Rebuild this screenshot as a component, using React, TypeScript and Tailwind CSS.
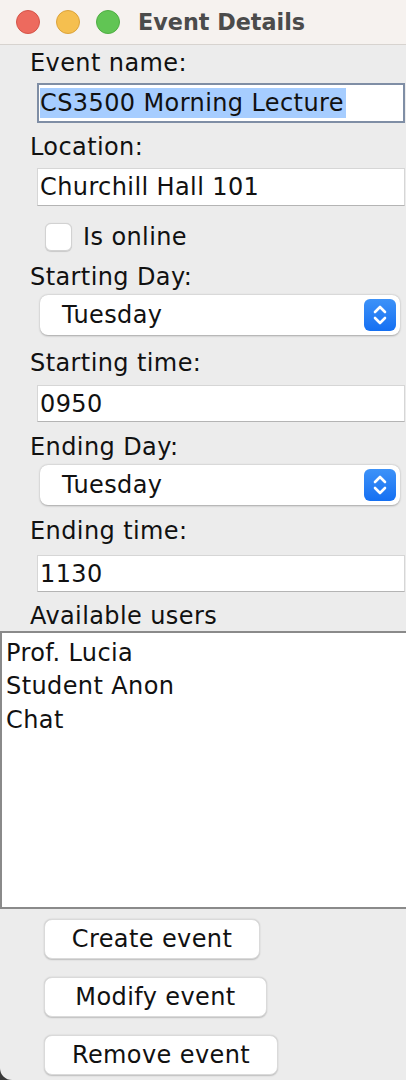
import React from "react";

const font = { fontFamily: '"DejaVu Sans", "Liberation Sans", sans-serif' };

function Label({ text, mt }: { text: string; mt: string }) {
  return (
    <div className={`${mt} h-[24px] leading-[24px] pl-[30px] text-[24px] tracking-[0.4px] text-[#111]`}>{text}</div>
  );
}

function Field({ value, mt, h }: { value: string; mt: string; h: string }) {
  return (
    <div
      className={`${mt} ${h} ml-[37px] mr-[1px] flex items-center bg-white border border-[#d6d6d6] border-b-[#b4b4b4] pl-[2px] text-[24px] tracking-[0.4px] text-[#111]`}
    >
      {value}
    </div>
  );
}

function Combo({ mt }: { mt: string }) {
  return (
    <div
      className={`${mt} h-[40px] ml-[40px] mr-[6px] flex items-center justify-between rounded-[8px] bg-white shadow-[0_0.5px_2px_rgba(0,0,0,0.3)] pl-[22px] pr-[4px] text-[24px] tracking-[0.4px] text-[#111]`}
    >
      <span>Tuesday</span>
      <div className="w-[32px] h-[32px] rounded-[6px] bg-gradient-to-b from-[#3d92f8] to-[#146ff2] flex items-center justify-center">
        <svg width="16" height="24" viewBox="0 0 16 24" fill="none" stroke="white" strokeWidth="2.6" strokeLinecap="round" strokeLinejoin="round">
          <path d="M3 9 L8 4 L13 9" />
          <path d="M3 15 L8 20 L13 15" />
        </svg>
      </div>
    </div>
  );
}

function Button({ text, w, mt }: { text: string; w: string; mt: string }) {
  return (
    <div
      className={`${mt} ${w} h-[40px] ml-[44px] flex items-center justify-center rounded-[8px] bg-white border border-[#dadada] shadow-[0_0.5px_1.5px_rgba(0,0,0,0.2)] text-[24px] tracking-[0.4px] text-[#111]`}
    >
      {text}
    </div>
  );
}

export default function App() {
  return (
    <div className="w-[406px] h-[1080px] bg-[#3a3a3a] overflow-hidden" style={font}>
      <div className="w-[406px] h-[1080px] bg-[#ececec] rounded-bl-[12px] overflow-hidden flex flex-col">
        <div className="h-[45px] shrink-0 bg-[#f6f2ef] border-b border-[#d7d3cf] flex items-center pl-[16px]">
          <div className="w-[24px] h-[24px] rounded-full bg-[#ed6a5e] border border-[#d55448]" />
          <div className="w-[24px] h-[24px] rounded-full bg-[#f5bf4f] border border-[#dca33a] ml-[16px]" />
          <div className="w-[24px] h-[24px] rounded-full bg-[#61c554] border border-[#4fae43] ml-[16px]" />
          <div className="ml-[18px] text-[22.3px] font-bold text-[#4b4b4b] leading-none">Event Details</div>
        </div>

        <Label text="Event name:" mt="mt-[6px]" />
        <div className="mt-[8px] h-[40px] ml-[37px] mr-[1px] flex items-center bg-white border-[2px] border-[#7f8ea5] pl-[1px] text-[24px] tracking-[0.4px] text-[#111]">
          <span className="bg-[#a6cdff] leading-[30px] pr-[2px]">CS3500 Morning Lecture</span>
        </div>

        <Label text="Location:" mt="mt-[12px]" />
        <Field value="Churchill Hall 101" mt="mt-[9px]" h="h-[38px]" />

        <div className="mt-[17px] h-[28px] flex items-center pl-[45px]">
          <div className="w-[27px] h-[28px] rounded-[6px] bg-white border border-[#d2d2d2] shadow-[0_0.5px_1px_rgba(0,0,0,0.15)]" />
          <span className="ml-[11px] text-[24px] tracking-[0.4px] text-[#111]">Is online</span>
        </div>

        <Label text="Starting Day:" mt="mt-[14px]" />
        <Combo mt="mt-[6px]" />

        <Label text="Starting time:" mt="mt-[16px]" />
        <Field value="0950" mt="mt-[10px]" h="h-[37px]" />

        <Label text="Ending Day:" mt="mt-[13px]" />
        <Combo mt="mt-[6px]" />

        <Label text="Ending time:" mt="mt-[14px]" />
        <Field value="1130" mt="mt-[12px]" h="h-[37px]" />

        <Label text="Available users" mt="mt-[12px]" />
        <div className="mt-[3px] h-[278px] shrink-0 bg-white border-[2px] border-r-0 border-[#8a8a8a] pt-[3px] pl-[4px] text-[24px] tracking-[0.4px] text-[#111]">
          <div className="h-[33.5px] flex items-center">Prof. Lucia</div>
          <div className="h-[33.5px] flex items-center">Student Anon</div>
          <div className="h-[33.5px] flex items-center">Chat</div>
        </div>

        <Button text="Create event" w="w-[216px]" mt="mt-[10px]" />
        <Button text="Modify event" w="w-[223px]" mt="mt-[18px]" />
        <Button text="Remove event" w="w-[234px]" mt="mt-[18px]" />
      </div>
    </div>
  );
}
